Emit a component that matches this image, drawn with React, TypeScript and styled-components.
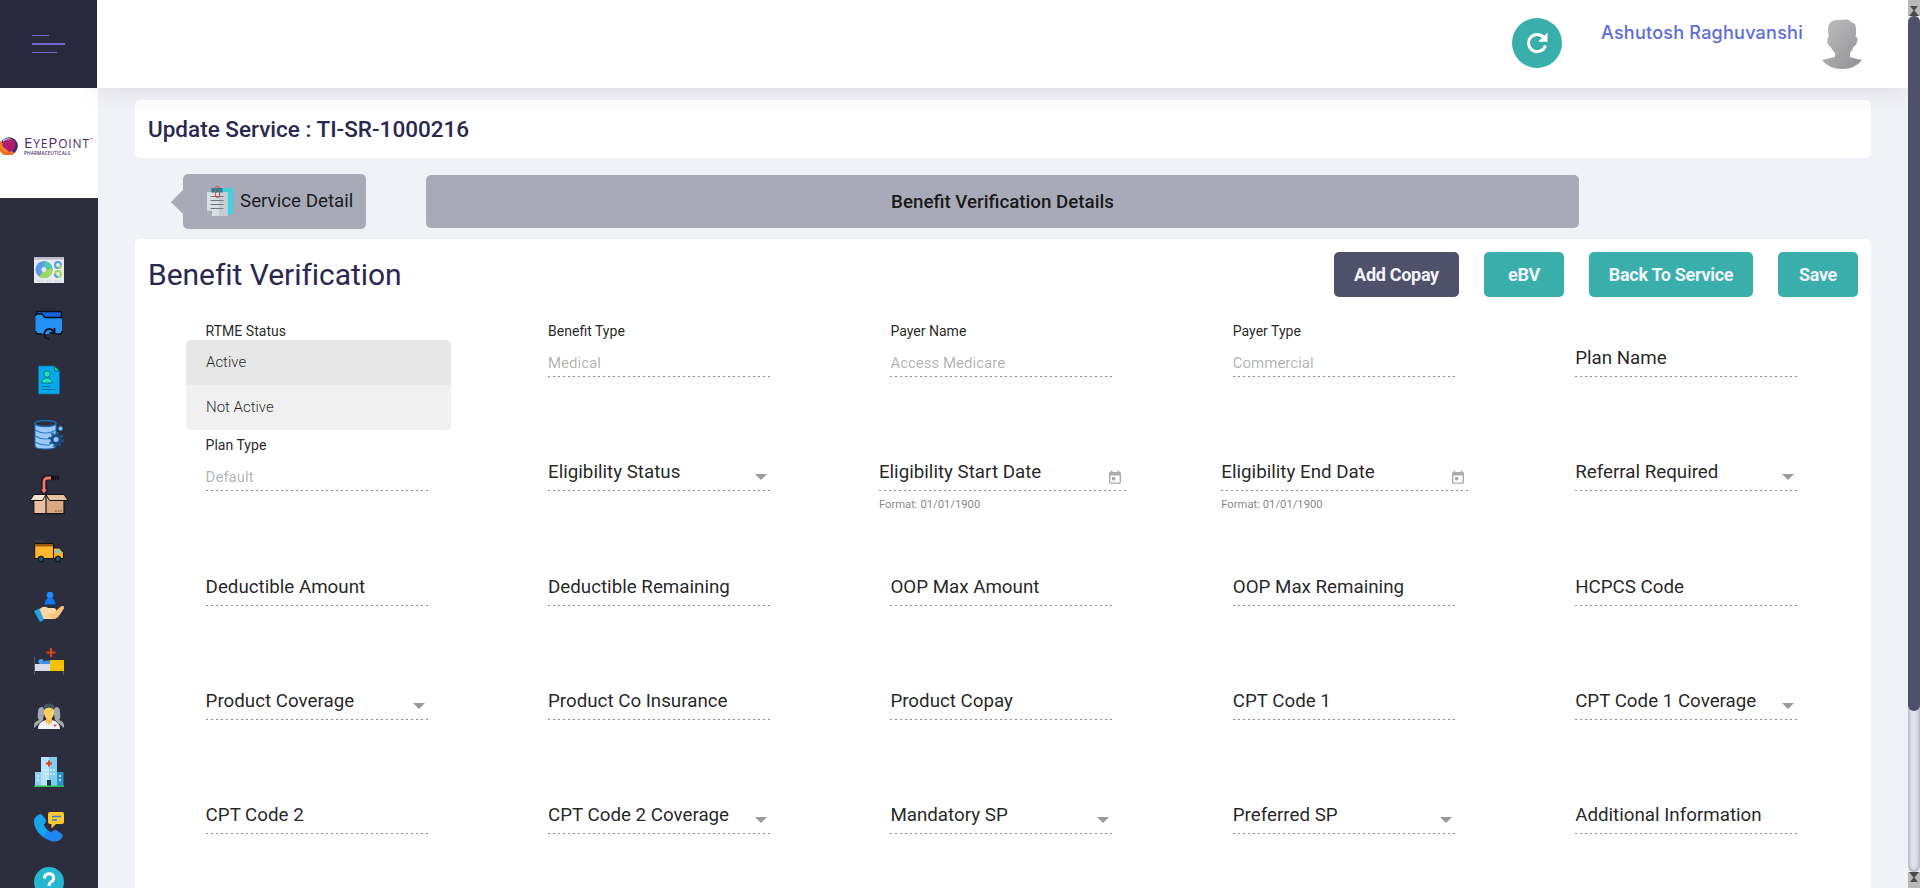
import React from "react";
import styled, { createGlobalStyle, css } from "styled-components";

const Global = createGlobalStyle`
  * { box-sizing: border-box; }
  html, body { margin: 0; padding: 0; }
  body {
    width: 1920px; height: 888px; overflow: hidden;
    font-family: Roboto, "Liberation Sans", sans-serif;
    background: #f1f2f7; color: rgba(0,0,0,.87);
  }
`;

const Page = styled.div`
  display: flex; width: 1920px; height: 888px; overflow: hidden;
`;
const Sidebar = styled.aside`
  width: 98px; flex: none; height: 888px; overflow: hidden;
  background: #2c2e3e; display: flex; flex-direction: column;
`;
const MenuToggle = styled.div`
  width: 97px; height: 88px; flex: none; background: #282a3c;
  padding: 35px 0 0 32px; display: flex; flex-direction: column; gap: 7px;
`;
const MenuLine = styled.span<{ $w: number; $h: number }>`
  display: block; width: ${p => p.$w}px; height: ${p => p.$h}px; background: #7367cb;
`;
const Brand = styled.div`
  height: 110px; flex: none; background: #fff; display: flex; padding-top: 49px;
`;
const BrandText = styled.div`
  margin-left: 6px; margin-top: -2px; color: #4b2a6b;
  font-family: "Open Sans", sans-serif; line-height: 1; white-space: nowrap;
`;
const BrandName = styled.div`
  font-size: 12px; height: 15px; line-height: 15px; letter-spacing: .85px;
  b { font-weight: 400; font-size: 15px; }
  sup { color: #e0246a; font-size: 4px; vertical-align: 7px; line-height: 0; }
`;
const BrandSub = styled.div`
  font-size: 4.6px; line-height: 5px; font-weight: 600; letter-spacing: .2px; margin-top: 1px;
`;
const Nav = styled.nav`
  padding-top: 57px; display: flex; flex-direction: column; align-items: center; gap: 25px;
  svg { flex: none; display: block; }
`;
const BoxSlot = styled.div`
  height: 37px; flex: none;
`;

const Main = styled.main`
  width: 1810px; flex: none; height: 888px;
  display: flex; flex-direction: column;
`;
const Header = styled.header`
  height: 88px; flex: none; margin-left: -1px; background: #fff; display: flex; position: relative;
  box-shadow: 0 4px 22px rgba(69, 65, 78, .11);
  padding: 18px 45px 0 0; justify-content: flex-end; z-index: 1;
`;
const RefreshButton = styled.button`
  width: 50px; height: 50px; border-radius: 50%; border: 0; padding: 0; background: #3aaeaa;
  display: flex; align-items: center; justify-content: center;
`;
const UserName = styled.div`
  margin-left: 39px; width: 203px; color: #5c6bdc; white-space: nowrap;
  font: 500 18px/30px Inter, sans-serif; letter-spacing: .24px;
`;
const AvatarBox = styled.div`
  margin-left: 17px; width: 42px; padding-top: 1px;
`;

const TitleCard = styled.section`
  margin: 12px 0 0 37px; width: 1736px; height: 58px; flex: none; background: #fff; border-radius: 5px;
  padding: 0 13px; line-height: 59px; font-size: 22.5px; font-weight: 500; color: #2b2850;
`;
const Steps = styled.div`
  height: 81px; flex: none; display: flex; padding: 16px 0 0 73px;
`;
const StepArrow = styled.span`
  width: 0; height: 0; margin-top: 16px;
  border: 12px solid transparent; border-left: 0; border-right-color: #a9aab7;
`;
const StepButton = styled.div`
  width: 183px; height: 55px; background: #a9aab7; border-radius: 5px;
  display: flex; align-items: center; padding: 0 0 2px 23px; gap: 7px;
  font-size: 18.75px; color: rgba(0,0,0,.85); white-space: nowrap;
`;
const StepBar = styled.div`
  margin: 1px 0 0 60px; width: 1153px; height: 53px; background: #a9aab7; border-radius: 5px;
  text-align: center; line-height: 55px; font-size: 18.75px; font-weight: 500; color: rgba(0,0,0,.87);
`;
const FormCard = styled.section`
  margin-left: 37px; width: 1736px; height: 649px; flex: none; background: #fff; border-radius: 5px 5px 0 0;
`;
const CardHead = styled.div`
  height: 76px; display: flex; justify-content: space-between; padding: 13px 13px 0;
`;
const CardTitle = styled.h2`
  margin: 0; font-size: 30px; font-weight: 400; line-height: 46px; color: #2b2850; letter-spacing: -.04px;
`;
const Actions = styled.div`
  display: flex; gap: 25px;
`;
const ActionButton = styled.button<{ $w: number; $dark?: boolean }>`
  width: ${p => p.$w}px; height: 45px; border: 0; border-radius: 5px; padding: 0;
  background: ${p => (p.$dark ? "#4f5069" : "#3aaeaa")}; color: #f1f4fb;
  font: 700 18px Roboto, sans-serif; letter-spacing: -.3px;
`;

const FormGrid = styled.div`
  display: grid; grid-template-columns: repeat(5, 342.4px); grid-auto-rows: 114.3px;
  padding-left: 70.6px;
`;
const Field = styled.div<{ $date?: boolean }>`
  width: ${p => (p.$date ? 247.5 : 223)}px; position: relative;
  margin-left: ${p => (p.$date ? -11.5 : 0)}px;
`;
const FloatLabel = styled.div`
  height: 31px; padding-top: 7px; font-size: 14.06px; line-height: 18px;
`;
const Control = styled.div<{ $filled: boolean }>`
  height: 31px; display: flex; justify-content: space-between; white-space: nowrap;
  ${p => p.$filled
    ? css`font-size: 15px; line-height: 35px; color: rgba(0,0,0,.33);`
    : css`font-size: 18.75px; line-height: 24px; color: rgba(0,0,0,.87);`}
  background: repeating-linear-gradient(90deg, #8f8f8f 0 2px, transparent 2px 5px) left bottom / 100% 1px no-repeat;
`;
const Caret = styled.span`
  width: 0; height: 0; margin: 14px 4px 0 0;
  border: 6px solid transparent; border-bottom: 0; border-top-color: #999;
`;
const CalendarIcon = styled.svg`
  margin: 10px 4px 0 0; width: 14px; height: 15px;
`;
const Hint = styled.div`
  font-size: 11.25px; line-height: 14px; margin-top: 7px; color: rgba(0,0,0,.5);
`;
const Menu = styled.div`
  position: absolute; left: -19.6px; top: 25px; width: 265px; height: 90px; border-radius: 5px;
  overflow: hidden; background: #f0f0f0; z-index: 2;
`;
const MenuItem = styled.div<{ $on?: boolean }>`
  height: 45px; line-height: 45px; padding-left: 20px; font-size: 15px; font-weight: 300;
  color: rgba(0,0,0,.87); background: ${p => (p.$on ? "#e7e7e7" : "#f0f0f0")};
`;

const ScrollTrack = styled.div`
  width: 12px; flex: none; height: 888px; display: flex; flex-direction: column;
  background: #f1f2f7; position: relative; z-index: 2;
`;
const ScrollGutter = styled.div`
  flex: 1; border-radius: 6px; background: #e4e5ec; box-shadow: inset 0 0 5px #8485a0;
`;
const ScrollThumb = styled.div`
  height: 695px; border-radius: 6px; background: #4f5069;
`;
const ScrollCap = styled.svg`
  width: 12px; height: 16px; flex: none; display: block; background: #b9b9b9;
`;

const Logo = () => (
  <svg width="18" height="18" viewBox="0 0 18 18">
    <circle cx="9" cy="9" r="8.8" fill="#37296a" />
    <path d="M0 4Q6 9 14.500 16A9 9 0 0 1 0 14Z" fill="#ee7023" />
    <circle cx="9" cy="8.2" r="6.6" fill="#b31b6c" />
    <path d="M0 6Q2 10 9 14.500L5 15Q1 12 0 9Z" fill="#f08a2a" />
    <path d="M3 3 Q7 0 12 2.4 L9 2.2 Q5 2.4 3 5Z" fill="#cfc8dd" />
  </svg>
);

type IconProps = { h?: number; w?: number; children: React.ReactNode };
const Icon = ({ h = 30, w = 30, children }: IconProps) => (
  <svg width={w} height={h} viewBox={`0 0 ${w} ${h}`}>{children}</svg>
);

const DashboardIcon = () => (
  <Icon>
    <rect x="0" y="2" width="30" height="26" fill="#e8eaf0" />
    <rect x="0" y="2" width="30" height="2.5" fill="#b9bccb" />
    <circle cx="10" cy="14.5" r="5.6" fill="none" stroke="#5b9bea" strokeWidth="6" />
    <path d="M10 8.9 A5.6 5.6 0 0 1 15.6 14.5" fill="none" stroke="#4cc9ae" strokeWidth="6" />
    <path d="M15.6 14 A5.6 5.6 0 0 1 7 19.2" fill="none" stroke="#9dd85f" strokeWidth="6" />
    <circle cx="24" cy="10" r="3" fill="none" stroke="#5b9bea" strokeWidth="2" />
    <path d="M27 10 A3 3 0 0 1 24 13" fill="none" stroke="#9dd85f" strokeWidth="2" />
    <circle cx="24" cy="19" r="3" fill="none" stroke="#9dd85f" strokeWidth="2" />
    <path d="M24 22 A3 3 0 0 1 21 19" fill="none" stroke="#5b9bea" strokeWidth="2" />
    <path d="M3 26h7M12 26h6M20 26h7" stroke="#cfd2dc" strokeWidth="1" />
  </Icon>
);
const FolderIcon = () => (
  <Icon>
    <path d="M3 1.5H26Q27.5 1.5 27.5 3V10H3Z" fill="#1565d8" stroke="#0a0d14" strokeWidth="1.4" />
    <path d="M1.500 6Q1.500 4 3.500 4H8L11 7.500H26Q28 7.500 28 9.500V22Q28 24 26 24H4Q1.500 24 1.500 22Z" fill="#2493f5" />
    <path d="M1.500 6Q1.500 4 3.500 4H8L11 7.500H28M1.700 21Q2 24 4 24H8M21 24H26Q28 24 28 21" fill="none" stroke="#0a0d14" strokeWidth="1.300" />
    <path d="M15 29A5 5 0 1 1 19.500 21.500M20.500 18V23H15.500" fill="none" stroke="#11131a" strokeWidth="1.900" />
  </Icon>
);
const ProfileDocIcon = () => (
  <Icon>
    <path d="M4.500 1H20.500L25.500 6V29H4.500Z" fill="#04a9ee" stroke="#0b6f93" strokeWidth=".8" />
    <path d="M20.500 1V6H25.500Z" fill="#1fe0b4" stroke="#0b4a63" strokeWidth=".8" />
    <circle cx="13" cy="9" r="3.200" fill="#1fe6b8" stroke="#0b5a73" strokeWidth=".8" />
    <path d="M7.500 18Q8 13 13 13T18.500 18Z" fill="#1fe6b8" stroke="#0b5a73" strokeWidth=".8" />
    <path d="M8 21.500H16M8 24.500H22" stroke="#0b6f93" strokeWidth="1" />
  </Icon>
);
const DatabaseIcon = () => (
  <Icon>
    <path d="M1 3V26Q1 29 11.500 29T22 26V3Z" fill="#9cc8fb" stroke="#1d6fb5" />
    <ellipse cx="11.500" cy="3.500" rx="10.500" ry="3" fill="#2c2e3e" stroke="#1d6fb5" strokeWidth="1.400" />
    <path d="M1 10Q6 13 11.500 13T22 10M1 16Q6 19 11.500 19T22 16M1 22Q6 25 11.500 25H16" fill="none" stroke="#2f7fc4" strokeWidth="1.200" />
    <circle cx="22" cy="19.500" r="6.600" fill="none" stroke="#1d5c96" strokeWidth="2.200" strokeDasharray="2.600 2.580" />
    <circle cx="22" cy="19.500" r="4" fill="#9cc8fb" stroke="#174f80" strokeWidth="3" />
    <circle cx="26.500" cy="8.500" r="2.200" fill="#8ec1fb" stroke="#1d6fb5" />
  </Icon>
);
const BoxIcon = () => (
  <Icon w={40} h={40}>
    <path d="M15 18V7Q15 2.500 19 2.500H24" fill="none" stroke="#15161c" strokeWidth="5.600" />
    <path d="M10 14.500H20L15 20.500Z" fill="#15161c" />
    <path d="M15 15V7Q15 3 19 3H22" fill="none" stroke="#f4776b" strokeWidth="2.800" />
    <path d="M12 14.500H18L15 18.500Z" fill="#f4776b" />
    <path d="M24 .5V5M26.500 .5V5M29 .5V5" stroke="#0c0d12" strokeWidth="1.500" />
    <path d="M5 21H35V38.600H5Z" fill="#d9a882" stroke="#14120f" strokeWidth="1.200" />
    <path d="M5.600 21H17V38H5.600Z" fill="#e9c1a0" />
    <path d="M5 19.500L17 19.500L13.500 25.500H1Z" fill="#f6e2cf" stroke="#14120f" />
    <path d="M17 19.500H35L39 25.500H20.500Z" fill="#e9c1a0" stroke="#14120f" />
    <path d="M17 20V38" stroke="#14120f" strokeWidth="1.200" />
    <path d="M26 36H33" stroke="#6b4a32" strokeWidth="1.200" strokeDasharray="1.600 1" />
  </Icon>
);
const TruckIcon = () => (
  <Icon>
    <path d="M0 4H10" stroke="#4a4a50" />
    <path d="M.7 6.500H19.500V21.500H.7Z" fill="#fdb62f" stroke="#1a1208" />
    <path d="M1 7H19V9.500H1Z" fill="#9a5a14" />
    <path d="M19.500 11H25.500L29.500 15.500V21.500H19.500Z" fill="#f9ae2b" stroke="#1a1208" />
    <path d="M21.500 12.500H25L28 16H21.500Z" fill="#7fc9d2" />
    <circle cx="7" cy="22" r="2.600" fill="#1f5c7c" stroke="#0d1a22" strokeWidth="1.200" />
    <circle cx="24" cy="22" r="2.600" fill="#1f5c7c" stroke="#0d1a22" strokeWidth="1.200" />
  </Icon>
);
const HandIcon = () => (
  <Icon>
    <circle cx="16" cy="3" r="3.300" fill="#1f8bff" />
    <path d="M10.500 12.500Q11 7.500 14 6H18Q21 7.500 21.500 12.500Z" fill="#1277f5" />
    <path d="M0 19L5.500 16.500L10 27.500L6 30Z" fill="#24a6e6" />
    <path d="M5.500 17Q10 13 14 16H20Q22.500 16.500 22 19L27 14.500Q30 13 30 16L24 25Q22 27 18 27H9.500Z" fill="#fcd7a6" />
    <path d="M14 21.500H20Q22 21 22 19L27 14.500Q30 13 30 16L24 25Q22 27 18 27Z" fill="#fbc079" />
  </Icon>
);
const BedIcon = () => (
  <Icon>
    <path d="M17 1V10M12.500 5.500H21.500" stroke="#d8431c" strokeWidth="2.200" />
    <path d="M.5 10V28M29.500 24V28" stroke="#555a63" />
    <path d="M1 17H17V24H1Z" fill="#d9dce6" />
    <path d="M16 13H30V24H16Z" fill="#f2c200" />
    <circle cx="7" cy="14.500" r="2.600" fill="#3d9df3" />
    <path d="M8 17L11 13.500H16V17Z" fill="#3d8fe8" />
  </Icon>
);
const DoctorsIcon = () => (
  <Icon>
    <path d="M4 10Q4 5 8 5Q11 6 10 12L9 18L0 26V23Q0 20 5 18Q3 15 4 10Z" fill="#a3a7ae" />
    <path d="M26 10Q26 5 22 5Q19 6 20 12L21 18L30 26V23Q30 20 25 18Q27 15 26 10Z" fill="#a3a7ae" />
    <path d="M4 27Q4 20 12 18H18Q26 20 26 27Z" fill="#f5f5f7" />
    <path d="M12 17H18V22L16.500 20L15 24L13.500 20L12 22Z" fill="#f8b84a" />
    <path d="M10 6Q10 2 15 2T20 6V12Q18 18 15 18T10 12Z" fill="#ffce62" />
    <path d="M10 8Q9 1.500 15 1.500T20 8Q18 5.500 15 5.500T10 8Z" fill="#3f5661" />
    <path d="M21 22V25M19.500 23.500H22.500" stroke="#ef5a50" strokeWidth="1.200" />
  </Icon>
);
const HospitalIcon = () => (
  <Icon>
    <path d="M1 15H8V29H1Z" fill="#8fd0f3" /><path d="M22 15H29.500V29H22Z" fill="#2a93cd" />
    <path d="M7 0H15V29H7Z" fill="#b9e4f8" /><path d="M15 0H23V29H15Z" fill="#81cdf0" />
    <path d="M15 3.500V9.500M12 6.500H18" stroke="#d8431c" strokeWidth="2" />
    <path d="M11 12V20M14 12V20M17 12V20M20 12V20" stroke="#e6f6fd" strokeWidth="1.400" strokeDasharray="2 2" />
    <path d="M4 18V26M26 18V26" stroke="#d7f0fb" strokeWidth="1.600" strokeDasharray="2 2" />
    <path d="M13 23H17V29H13Z" fill="#17384f" />
    <path d="M0 28.500H30V30H0Z" fill="#2fc352" />
  </Icon>
);
const PhoneIcon = () => (
  <Icon>
    <path d="M3 4Q6 1 8 3L12 8Q12 11 9.500 12.500Q12 18 17.500 20.500Q19 17.500 22 18L28 22Q29.500 24 27 27Q24 30 19 29.500Q2 25 0 10Q0 6 3 4Z" fill="#2088f5" />
    <path d="M3 4Q6 1 8 3L12 8Q12 11 9.500 12.500Q11 16 13.500 18.500L9 24Q1 18 0 10Q0 6 3 4Z" fill="#18a4e8" />
    <path d="M16 0H28Q30 0 30 2V10Q30 12 28 12H22L17.500 16.500V12H16Q14 12 14 10V2Q14 0 16 0Z" fill="#fdc830" />
    <path d="M18 4.500H27M18 8H23" stroke="#2f7fe0" strokeWidth="1.500" />
  </Icon>
);
const HelpIcon = () => (
  <Icon>
    <circle cx="15" cy="15" r="15" fill="#27b6d0" />
    <path d="M10.500 11.500Q10.500 6.800 15 6.800T19.700 11Q19.700 13.500 17 15Q15 16.200 15 19" fill="none" stroke="#fff" strokeWidth="3" />
    <circle cx="15" cy="23" r="1.900" fill="#fff" />
  </Icon>
);
const ClipboardIcon = () => (
  <Icon w={27} h={30}>
    <path d="M14 2H26.700V28H14Z" fill="#4accd8" />
    <path d="M22 2H26.700V28H22Z" fill="#3fd3e2" />
    <path d="M1 6H21.500V30H6L1 25Z" fill="#d9e0e2" />
    <path d="M13 6H21.500V30H13Z" fill="#c6d0d4" />
    <path d="M1 25H6V30Z" fill="#9eaab0" />
    <path d="M5.500 2H16.500V6.500H5.500Z" fill="#12829c" />
    <path d="M4.500 10.500H17.500M4.500 14.500H17.500M4.500 18.500H17.500M4.500 22.500H17.500" stroke="#6b7b84" />
    <path d="M13.500 3V10Q13.500 11.500 11.500 11.500T9.500 10V2Q9.500 .5 11.500 .5T13.500 2" fill="none" stroke="#e0524d" strokeWidth="1.100" />
  </Icon>
);

const Avatar = () => (
  <svg width="42" height="52" viewBox="0 0 42 52">
    <defs>
      <linearGradient id="skin" x1="0" y1="0" x2="1" y2="1">
        <stop offset="0" stopColor="#bfbfc0" /><stop offset="1" stopColor="#8f9092" />
      </linearGradient>
    </defs>
    <path d="M11 2.500Q14 .5 17 1.200Q21 .2 27 .6Q30 3.500 34 5Q36 12 34.500 17.500Q37.500 19 36 23Q35 27 33 27Q31 32 29 34V38Q35 40 41 41Q34 50 21 50T1 41Q9 39 14 38V34Q11 31 9 27Q7 27 6.300 23Q6 18 8 17.500Q6 9 8 5.500Q9 3 11 2.500Z" fill="url(#skin)" />
  </svg>
);

type Kind = "text" | "select" | "date";
type FieldSpec = { label: string; value?: string; kind?: Kind; menu?: string[] };

const FIELDS: FieldSpec[] = [
  { label: "RTME Status", value: "", menu: ["Active", "Not Active"] },
  { label: "Benefit Type", value: "Medical" },
  { label: "Payer Name", value: "Access Medicare" },
  { label: "Payer Type", value: "Commercial" },
  { label: "Plan Name" },
  { label: "Plan Type", value: "Default" },
  { label: "Eligibility Status", kind: "select" },
  { label: "Eligibility Start Date", kind: "date" },
  { label: "Eligibility End Date", kind: "date" },
  { label: "Referral Required", kind: "select" },
  { label: "Deductible Amount" },
  { label: "Deductible Remaining" },
  { label: "OOP Max Amount" },
  { label: "OOP Max Remaining" },
  { label: "HCPCS Code" },
  { label: "Product Coverage", kind: "select" },
  { label: "Product Co Insurance" },
  { label: "Product Copay" },
  { label: "CPT Code 1" },
  { label: "CPT Code 1 Coverage", kind: "select" },
  { label: "CPT Code 2" },
  { label: "CPT Code 2 Coverage", kind: "select" },
  { label: "Mandatory SP", kind: "select" },
  { label: "Preferred SP", kind: "select" },
  { label: "Additional Information" },
];

const FormField = ({ label, value, kind = "text", menu }: FieldSpec) => {
  const filled = value !== undefined;
  return (
    <Field $date={kind === "date"}>
      <FloatLabel>{filled ? label : null}</FloatLabel>
      <Control $filled={filled}>
        <span>{filled ? value : label}</span>
        {kind === "select" && <Caret />}
        {kind === "date" && (
          <CalendarIcon viewBox="0 0 14 15">
            <path d="M3.500 .5V3M10.500 .5V3" stroke="#aaa" strokeWidth="1.500" />
            <rect x="1.700" y="2.700" width="10.600" height="10.400" rx="1.200" fill="none" stroke="#aaa" strokeWidth="1.400" />
            <path d="M1.200 2.500H12.800V5.500H1.200Z" fill="#aaa" />
            <rect x="4" y="7" width="3.300" height="3.300" fill="#aaa" />
          </CalendarIcon>
        )}
      </Control>
      {kind === "date" && <Hint>Format: 01/01/1900</Hint>}
      {menu && (
        <Menu>
          {menu.map((m, i) => <MenuItem key={m} $on={i === 0}>{m}</MenuItem>)}
        </Menu>
      )}
    </Field>
  );
};

const CapGlyph = () => (
  <>
    <path d="M2 6H10L6 11Z" fill="#4a4a4a" />
    <path d="M1 16H11L6 10Z" fill="#4a4a4a" />
  </>
);

export default function App() {
  return (
    <>
      <Global />
      <Page>
        <Sidebar>
          <MenuToggle>
            <MenuLine $w={17} $h={1} />
            <MenuLine $w={33} $h={2} />
            <MenuLine $w={25} $h={1} />
          </MenuToggle>
          <Brand>
            <Logo />
            <BrandText>
              <BrandName><b>E</b>YE<b>P</b>OINT<sup>™</sup></BrandName>
              <BrandSub>PHARMACEUTICALS</BrandSub>
            </BrandText>
          </Brand>
          <Nav>
            <DashboardIcon /><FolderIcon /><ProfileDocIcon /><DatabaseIcon />
            <BoxSlot><BoxIcon /></BoxSlot>
            <TruckIcon /><HandIcon /><BedIcon /><DoctorsIcon /><HospitalIcon /><PhoneIcon /><HelpIcon />
          </Nav>
        </Sidebar>
        <Main>
          <Header>
            <RefreshButton aria-label="Refresh">
              <svg width="22" height="22" viewBox="0 0 22 22">
                <path d="M17.800 5.500A8.600 8.600 0 1 0 19.400 13.500" fill="none" stroke="#fff" strokeWidth="3" />
                <path d="M21.500 .5V9.800H12Z" fill="#fff" />
              </svg>
            </RefreshButton>
            <UserName>Ashutosh Raghuvanshi</UserName>
            <AvatarBox><Avatar /></AvatarBox>
          </Header>
          <TitleCard>Update Service : TI-SR-1000216</TitleCard>
          <Steps>
            <StepArrow />
            <StepButton><ClipboardIcon />Service Detail</StepButton>
            <StepBar>Benefit Verification Details</StepBar>
          </Steps>
          <FormCard>
            <CardHead>
              <CardTitle>Benefit Verification</CardTitle>
              <Actions>
                <ActionButton $w={125} $dark>Add Copay</ActionButton>
                <ActionButton $w={80}>eBV</ActionButton>
                <ActionButton $w={164}>Back To Service</ActionButton>
                <ActionButton $w={80}>Save</ActionButton>
              </Actions>
            </CardHead>
            <FormGrid>
              {FIELDS.map(f => <FormField key={f.label} {...f} />)}
            </FormGrid>
          </FormCard>
        </Main>
        <ScrollTrack>
          <ScrollCap viewBox="0 0 12 16"><CapGlyph /></ScrollCap>
          <ScrollGutter><ScrollThumb /></ScrollGutter>
          <ScrollCap viewBox="0 0 12 16"><g transform="rotate(180 6 8)"><CapGlyph /></g></ScrollCap>
        </ScrollTrack>
      </Page>
    </>
  );
}
